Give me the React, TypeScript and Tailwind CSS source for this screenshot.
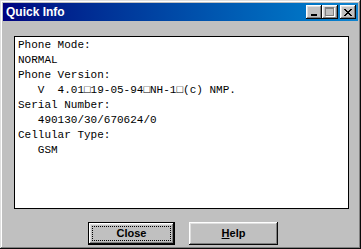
import React from 'react';

const raised =
  'shadow-[inset_-1px_-1px_#0a0a0a,inset_1px_1px_#ffffff,inset_-2px_-2px_#808080,inset_2px_2px_#dfdfdf]';

const lines = [
  'Phone Mode:',
  'NORMAL',
  'Phone Version:',
  '   V  4.01\u25a119-05-94\u25a1NH-1\u25a1(c) NMP.',
  'Serial Number:',
  '   490130/30/670624/0',
  'Cellular Type:',
  '   GSM',
];

// small caption button in the title bar
const TitleButton = ({ children }: { children: React.ReactNode }) => (
  <div className={`w-[16px] h-[14px] bg-[#c0c0c0] flex items-center justify-center ${raised}`}>
    {children}
  </div>
);

const App = () => {
  return (
    <div
      className="w-[361px] h-[249px] bg-[#c0c0c0] p-[3px] flex flex-col shadow-[inset_-1px_-1px_#0a0a0a,inset_1px_1px_#dfdfdf,inset_-2px_-2px_#808080,inset_2px_2px_#ffffff]"
      style={{ fontFamily: '"Liberation Sans", Arial, sans-serif' }}
    >
      {/* Title bar */}
      <div className="h-[18px] flex items-center justify-between pl-[3px] pr-[2px] bg-gradient-to-r from-[#000080] to-[#1084d0]">
        <span className="text-white font-bold text-[12px] leading-none">Quick Info</span>
        <div className="flex items-center">
          <TitleButton>
            <div className="w-[6px] h-[2px] bg-black mt-[6px] -ml-[1px]" />
          </TitleButton>
          <TitleButton>
            <div className="w-[9px] h-[9px] border border-[#808080] border-t-2 shadow-[1px_1px_#ffffff] -mt-[1px] -ml-[1px]" />
          </TitleButton>
          <div className="w-[2px]" />
          <TitleButton>
            <svg width="8" height="7" viewBox="0 0 8 7" className="-ml-[1px]">
              <path
                d="M0 0h2v1h1v1h2v-1h1v-1h2v1h-1v1h-1v1h-1v1h1v1h1v1h1v1h-2v-1h-1v-1h-2v1h-1v1h-2v-1h1v-1h1v-1h1v-1h-1v-1h-1v-1h-1z"
                fill="#000"
              />
            </svg>
          </TitleButton>
        </div>
      </div>

      {/* Info panel */}
      <div className="mt-[15px] ml-[11px] w-[335px] h-[173px] bg-white border border-black pl-[3px] pt-[1px]">
        <pre
          className="text-[11px] leading-[15px] text-black m-0"
          style={{ fontFamily: '"Liberation Mono", "DejaVu Sans Mono", monospace' }}
        >
          {lines.join('\n')}
        </pre>
      </div>

      {/* Buttons */}
      <div className="mt-[13px] ml-[85px] flex gap-[14px]">
        <div className="w-[87px] h-[23px] border border-black bg-[#c0c0c0]">
          <div className={`w-full h-full p-[3px] ${raised}`}>
            <div className="w-full h-full border border-dotted border-black flex items-center justify-center text-[11px] font-bold text-black">
              Close
            </div>
          </div>
        </div>
        <div className={`w-[89px] h-[23px] bg-[#c0c0c0] flex items-center justify-center text-[11px] font-bold text-black ${raised}`}>
          <span>
            <span className="underline">H</span>elp
          </span>
        </div>
      </div>
    </div>
  );
};

export default App;
